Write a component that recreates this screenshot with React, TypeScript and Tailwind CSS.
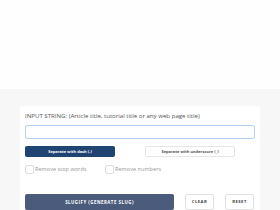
export default function App() {
  return (
    <div className="min-h-[210px] bg-[#fefefe] font-['Open_Sans',sans-serif] text-[#444]">
      <div className="h-[89px] bg-[#fefefe]" />
      <div className="bg-[#f7f7f7] px-5 pt-[17px] pb-10">
        <div className="rounded-[2px] bg-white px-[5px] pt-[6px] pb-6">
          <label className="block text-[6.1px] leading-[8px] text-[#555]">
            INPUT STRING: (Article title, tutorial title or any web page title)
          </label>
          <input
            type="text"
            className="mt-[5px] block h-[14px] w-full rounded-[2px] border border-[#b6d2f5] bg-white outline-none"
          />
          <div className="mt-[7px] grid grid-cols-[90px_1fr] items-center">
            <button
              type="button"
              className="h-[11px] w-[90px] rounded-[2px] bg-[#1f4472] text-[4px] font-bold leading-none text-white"
            >
              Separate with dash (-)
            </button>
            <div className="flex justify-center pl-[10px]">
              <button
                type="button"
                className="h-[11px] w-[90px] rounded-[2px] border border-[#e6e6e6] bg-white text-[4px] font-bold leading-none text-[#555]"
              >
                Separate with underscore (_)
              </button>
            </div>
          </div>
          <div className="mt-[8px] flex items-center text-[5.6px] text-[#999]">
            <label className="flex w-[80px] items-center gap-[1px]">
              <span className="h-[9px] w-[9px] rounded-[2px] border border-[#ddd] bg-white" />
              Remove stop words
            </label>
            <label className="flex items-center gap-[1px]">
              <span className="h-[9px] w-[9px] rounded-[2px] border border-[#ddd] bg-white" />
              Remove numbers
            </label>
          </div>
          <div className="mt-[20px] flex items-start">
            <button
              type="button"
              className="h-[16px] w-[149px] rounded-[2px] bg-[#4a5b7c] text-[4.4px] font-bold tracking-[0.5px] text-white"
            >
              SLUGIFY (GENERATE SLUG)
            </button>
            <button
              type="button"
              className="ml-[11px] h-[16px] w-[29px] rounded-[2px] border border-[#e2e2e2] bg-white text-[4.2px] font-bold tracking-[0.5px] text-[#444]"
            >
              CLEAR
            </button>
            <button
              type="button"
              className="ml-[11px] h-[16px] w-[29px] rounded-[2px] border border-[#e2e2e2] bg-white text-[4.2px] font-bold tracking-[0.5px] text-[#444]"
            >
              RESET
            </button>
          </div>
        </div>
      </div>
    </div>
  )
}
